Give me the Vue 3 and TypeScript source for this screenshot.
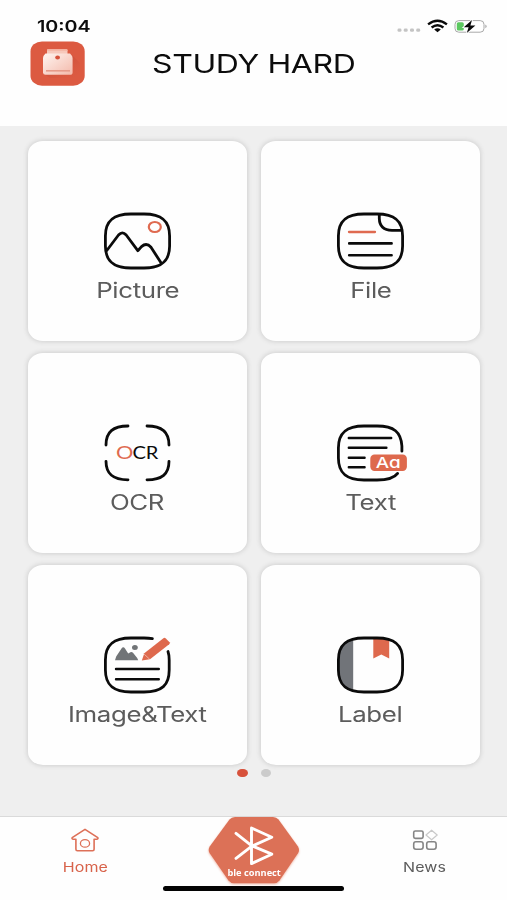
<script setup lang="ts">
import { ref } from 'vue'

type CardKind = 'picture' | 'file' | 'ocr' | 'text' | 'imageText' | 'label'

interface Card {
  kind: CardKind
  title: string
}

const cards: Card[] = [
  { kind: 'picture', title: 'Picture' },
  { kind: 'file', title: 'File' },
  { kind: 'ocr', title: 'OCR' },
  { kind: 'text', title: 'Text' },
  { kind: 'imageText', title: 'Image&Text' },
  { kind: 'label', title: 'Label' },
]

const pages = [0, 1]
const activePage = ref(0)

const frame =
  'M35.5 4H42C60 4 67.6 11 67.6 26V36C67.6 51 60 58 42 58H29C11 58 3.4 51 3.4 36V26C3.4 11 11 4 29 4Z'
</script>

<template>
  <div class="screen">
    <header class="header">
      <div class="status">
        <span class="time"><span class="wide">10:04</span></span>
        <svg class="indicators" width="92" height="16" viewBox="0 0 92 16">
          <g fill="#c4c4c4">
            <rect x="1.5" y="9.6" width="4" height="3.2" rx="1.4" />
            <rect x="7.7" y="9.6" width="4" height="3.2" rx="1.4" />
            <rect x="14" y="9.6" width="4" height="3.2" rx="1.4" />
            <rect x="20.2" y="9.6" width="4" height="3.2" rx="1.4" />
          </g>
          <g fill="none" stroke="#0a0a0a" stroke-width="2.4">
            <path d="M32.1 5.4Q41.5 -2.1 50.9 5.4" />
            <path d="M35.6 8.5Q41.5 3.9 47.4 8.5" />
          </g>
          <path d="M38.2 10.4Q41.5 8 44.8 10.4L41.5 13.3Z" fill="#0a0a0a" />
          <rect x="59" y="1.6" width="29" height="11.6" rx="3.8" fill="#fff" stroke="#a8a8a8" />
          <path d="M89.4 5.6Q92 7.4 89.4 9.2Z" fill="#a0a0a0" />
          <rect x="60.8" y="3.2" width="7" height="8.4" rx="1.6" fill="#5cc860" />
          <path
            d="M76 1.1 67.8 8.2H72.6L70.8 14.1 79.4 6.4H74.4Z"
            fill="#0a0a0a"
            stroke="#fff"
            stroke-width="1.6"
            paint-order="stroke"
          />
        </svg>
      </div>
      <div class="title-row">
        <svg class="logo" width="56" height="46" viewBox="0 0 56 46">
          <defs>
            <linearGradient id="body" x1="0" y1="0" x2="1" y2="1">
              <stop offset="0" stop-color="#fff4f0" />
              <stop offset="1" stop-color="#f3b9aa" />
            </linearGradient>
            <linearGradient id="shade" x1="0" y1="0" x2="1" y2="1">
              <stop offset="0.45" stop-color="#b84432" stop-opacity="0.75" />
              <stop offset="1" stop-color="#d85a42" stop-opacity="0" />
            </linearGradient>
          </defs>
          <rect x="0.5" y="0.4" width="54.2" height="44.4" rx="11.5" ry="10" fill="#dc5a41" />
          <path d="M42 14 50 22V30Q48 36 42 37H20L14 33Z" fill="url(#shade)" opacity="0.4" />
          <rect x="17" y="8.2" width="20.5" height="9" rx="1" fill="#f7c8bb" />
          <rect x="17" y="8.2" width="20.5" height="1.6" rx="0.8" fill="#f3b3a2" />
          <path d="M15.5 12.6H40Q42.6 15 42.6 17V31.4Q42.6 33.8 40 33.8H15.5Q13 33.8 13 31.4V17Q13 15 15.5 12.6Z" fill="url(#body)" />
          <rect x="16" y="29" width="24" height="1.6" fill="#e69b8a" />
          <ellipse cx="27.6" cy="16.6" rx="2.4" ry="2" fill="#d6513b" />
        </svg>
        <h1 class="title"><span class="wide">STUDY HARD</span></h1>
      </div>
    </header>

    <main class="content">
      <div class="grid">
        <button v-for="card in cards" :key="card.kind" class="card" type="button">
          <svg class="icon" width="71" height="60" viewBox="0 0 71 60">
            <g fill="none" stroke="#0b0b0b" stroke-width="2.8" stroke-linecap="round" stroke-linejoin="round">
              <template v-if="card.kind === 'picture'">
                <path :d="frame" />
                <path d="M4.8 40.5 16.5 25Q20.4 20.8 24.2 25L35.8 40.7 39.5 36.6Q44.5 32.2 49 37.2L59 52.8" />
                <ellipse cx="52.8" cy="17" rx="6" ry="5" stroke="#df6a50" stroke-width="2.2" />
              </template>

              <template v-else-if="card.kind === 'file'">
                <path :d="frame" />
                <path d="M44.3 4.5V8.5C44.5 16 49 20.2 57 20.3H66.6" />
                <path d="M14 22H40" stroke="#df6a50" stroke-width="2.3" />
                <path d="M14.2 33.4H56.6M14.2 45.3H56.6" stroke-width="2.6" />
              </template>

              <template v-else-if="card.kind === 'ocr'">
                <path
                  d="M4 23C4 10 11 4 26 4M45 4C60 4 67 10 67 23M67 39.3C67 52 60 57.8 45 57.8M26 57.8C11 57.8 4 52 4 39.3"
                />
                <g class="ocr" stroke="none">
                  <text x="14" y="36.6" textLength="17.4" lengthAdjust="spacingAndGlyphs" fill="#df6a50">O</text>
                  <text x="30.4" y="36.6" textLength="26" lengthAdjust="spacingAndGlyphs" fill="#0b0b0b">CR</text>
                </g>
              </template>

              <template v-else-if="card.kind === 'text'">
                <path
                  d="M66.9 29.2V24C66 10 59 4 42 4H29C11 4 3.4 11 3.4 26V36C3.4 51 11 58 29 58H42C52 58 59 56.4 62.6 51.4"
                />
                <path d="M13.8 16H56.2M13.8 25.7H51.4M13.8 35.8H29.6M13.8 45.3H29.6" stroke-width="2.4" />
                <rect x="35.3" y="32.6" width="36.6" height="16.4" rx="4.2" fill="#de694d" stroke="none" />
                <text
                  class="aa"
                  x="40.8"
                  y="46"
                  textLength="25"
                  lengthAdjust="spacingAndGlyphs"
                  fill="#fff"
                  stroke="none"
                >Aa</text>
              </template>

              <template v-else-if="card.kind === 'imageText'">
                <path
                  d="M50.4 4.6Q47 4 42 4H29C11 4 3.4 11 3.4 26V36C3.4 51 11 58 29 58H42C60 58 67.2 51 67.2 36V26Q67.2 21 66 17.5"
                />
                <path d="M14 35H56.8M14 45.3H56.8" stroke-width="2.4" />
                <g stroke="none">
                  <path
                    d="M13 26.2 14.2 22.5 19.5 14.4Q21.3 12.2 23 14.4L26.2 19.6 28.4 18.2Q29.8 17.4 31 18.8L35.2 24 36.2 26.2Z"
                    fill="#717477"
                  />
                  <ellipse cx="32.9" cy="13.4" rx="2.9" ry="2.5" fill="#717477" />
                  <path d="M39.8 26.6 42.3 19.2 61.4 4.3Q62.6 3.4 63.8 4.4L67.6 8.2Q68.4 9.2 67.2 10.2L48 25.2Z" fill="#de694d" />
                  <path d="M42.4 20.4 47.4 25" stroke="#fff" stroke-width="0.7" opacity="0.65" />
                </g>
              </template>

              <template v-else>
                <path
                  d="M18.2 4.7V57.3C8 55.5 3.4 49 3.4 36V26C3.4 13 8 6.5 18.2 4.7Z"
                  fill="#717479"
                  stroke="none"
                />
                <path d="M38.3 4.5H54.2V24.4L46.3 20.4 38.3 24.4Z" fill="#de694d" stroke="none" />
                <path :d="frame" />
              </template>
            </g>
          </svg>
          <span class="card-title"><span class="wide">{{ card.title }}</span></span>
        </button>
      </div>
      <div class="pager">
        <span v-for="page in pages" :key="page" class="dot" :class="{ active: page === activePage }"></span>
      </div>
    </main>

    <footer class="footer">
      <nav class="tabs">
        <a class="tab home">
          <svg width="28" height="24" viewBox="0 0 28 24" fill="none" stroke="#dd7058" stroke-width="1.6" stroke-linejoin="round">
            <path d="M14 1.3 1.2 9.6Q.6 11 2 11.2H4.9V21.2Q4.9 22.7 6.4 22.7H21.6Q23.1 22.7 23.1 21.2V11.2H26Q27.4 11 26.8 9.6Z" />
            <ellipse cx="14" cy="15.4" rx="4.6" ry="3.8" stroke-width="1.3" />
          </svg>
          <span class="tab-label"><span class="wide">Home</span></span>
        </a>
        <a class="connect">
          <svg width="92" height="68" viewBox="0 0 92 68">
            <path
              d="M27 0H65Q68.5 0 70.5 2.6L90 29.6Q92 33 90 36.2L71.5 63.5Q69.4 66.2 66 66.2H26Q22.6 66.2 20.5 63.5L1.7 36.2Q-.3 33 1.7 29.6L21.5 2.6Q23.5 0 27 0Z"
              fill="#dc7157"
            />
            <path
              d="M28 16.4 43.5 28.6 63.8 37.2 43.5 46.6V11L63.8 20.2 43.5 29.4 28 41.4"
              fill="none"
              stroke="#fff"
              stroke-width="2.9"
              stroke-linecap="round"
              stroke-linejoin="round"
            />
            <text class="connect-label" x="19.4" y="59" textLength="53.5" lengthAdjust="spacingAndGlyphs">ble connect</text>
          </svg>
        </a>
        <a class="tab news">
          <svg width="28" height="24" viewBox="0 0 28 24" fill="none" stroke="#858585" stroke-width="1.6">
            <rect x="2.7" y="3" width="9.4" height="7.4" rx="1.6" />
            <rect x="2.7" y="13.7" width="9.4" height="7.6" rx="2.2" />
            <rect x="15.7" y="13.7" width="9.4" height="7.6" rx="2.2" />
            <path d="M20.6 2.2 26.2 7 20.6 11.8 15 7Z" stroke="#c9c9c9" stroke-width="1.2" stroke-linejoin="round" />
          </svg>
          <span class="tab-label"><span class="wide">News</span></span>
        </a>
      </nav>
      <div class="home-bar"></div>
    </footer>
  </div>
</template>

<style>
body {
  margin: 0;
  background: #efefef;
}
</style>

<style scoped>
.screen {
  width: 507px;
  height: 900px;
  display: flex;
  flex-direction: column;
  overflow: hidden;
  background: #efefef;
  font-family: Inter, 'Liberation Sans', sans-serif;
}

.wide {
  display: inline-block;
  transform: scaleX(1.23);
}

.header {
  height: 126px;
  flex: none;
  background: #fefefe;
}

.status {
  height: 41px;
  box-sizing: border-box;
  padding: 18px 19px 0 36px;
  display: flex;
  justify-content: space-between;
}

.time {
  width: 55px;
  display: flex;
  justify-content: center;
  font-size: 16px;
  line-height: 17px;
  font-weight: 600;
  color: #0c0c0c;
}

.indicators {
  margin-top: 1px;
}

.title-row {
  display: grid;
  grid-template-columns: 56px 1fr 56px;
  padding: 0 30px;
}

.title {
  margin: 5px 0 0;
  text-align: center;
  font-size: 26px;
  line-height: 36px;
  font-weight: 400;
  letter-spacing: -0.3px;
  color: #0c0c0c;
}

.content {
  flex: 1;
  padding: 15px 27px 0 28px;
}

.grid {
  display: grid;
  grid-template-columns: repeat(2, 219px);
  grid-auto-rows: 200px;
  gap: 12px 14px;
}

.card {
  display: flex;
  flex-direction: column;
  align-items: center;
  box-sizing: border-box;
  padding: 69px 0 0;
  border: 0;
  border-radius: 15px / 13px;
  background: #fefefe;
  box-shadow: 0 0 4px 1px #d2d2d2;
  font-family: inherit;
}

.icon {
  flex: none;
  overflow: visible;
}

.card-title {
  margin-top: 8px;
  font-size: 21px;
  line-height: 26px;
  letter-spacing: -0.3px;
  color: #5c5c5c;
}

.ocr {
  font-family: Lato, sans-serif;
  font-size: 16.5px;
  font-weight: 400;
}

.aa {
  font-family: Inter, sans-serif;
  font-size: 15px;
  font-weight: 500;
  font-feature-settings: 'cv11';
}

.pager {
  display: flex;
  justify-content: center;
  gap: 13px;
  margin-top: 3.5px;
}

.dot {
  width: 10.4px;
  height: 8.6px;
  border-radius: 50%;
  background: #cbcbcb;
}

.dot.active {
  background: #d7513b;
}

.footer {
  height: 83px;
  flex: none;
  background: #fefefe;
  box-shadow: 0 -1px 0 #dadada;
}

.tabs {
  display: grid;
  grid-template-columns: 170px 1fr 165px;
  height: 68px;
}

.tab {
  display: flex;
  flex-direction: column;
  align-items: center;
  padding-top: 11px;
  color: #5c5c5c;
}

.tab.home {
  color: #d8634b;
}

.tab-label {
  margin-top: 7px;
  font-size: 13px;
  line-height: 17px;
  letter-spacing: 0.1px;
}

.connect {
  display: flex;
  justify-content: center;
}

.connect svg {
  margin-right: 4px;
  filter: drop-shadow(0 1px 1px #f0b5a4);
}

.connect-label {
  font-family: 'Open Sans', sans-serif;
  font-size: 9px;
  font-weight: 700;
  fill: #fff;
}

.home-bar {
  width: 181px;
  height: 5.6px;
  margin: 0.5px auto 0;
  border-radius: 3px;
  background: #030303;
}
</style>
